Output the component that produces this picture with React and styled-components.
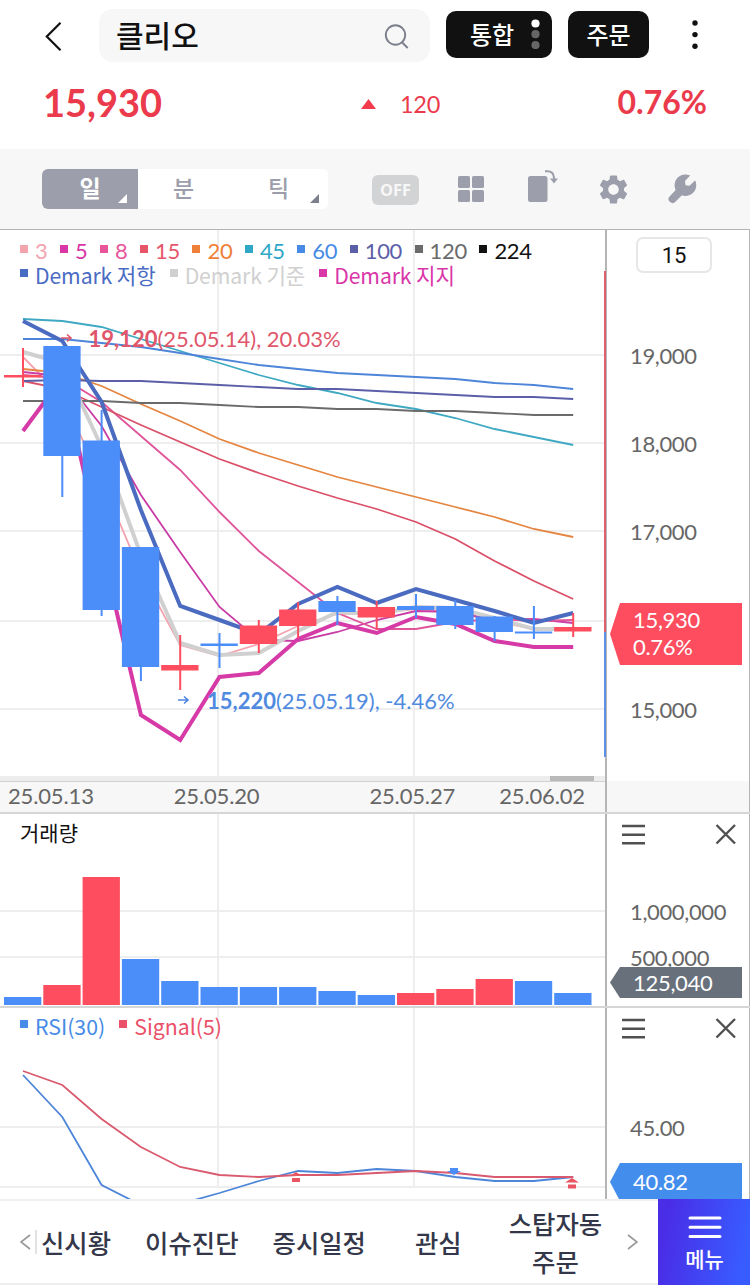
import React from 'react'
import styled, { createGlobalStyle } from 'styled-components'
import { MdSettings } from 'react-icons/md'

const RED = '#fd4d5e'
const BLUE = '#4b8df9'
const NUM = "Lato, 'Noto Sans CJK KR', sans-serif"
const KR = "'Noto Sans CJK KR', sans-serif"

const GlobalStyle = createGlobalStyle`
  * {
    box-sizing: border-box;
  }
  body {
    margin: 0;
    background: #fff;
    font-family: ${KR};
  }
  button {
    border: none;
    padding: 0;
    background: transparent;
    font-family: inherit;
  }
  svg {
    display: block;
    flex: none;
  }
`

const Screen = styled.div`
  width: 750px;
  height: 1285px;
  display: flex;
  flex-direction: column;
  overflow: hidden;
`

const Header = styled.header`
  height: 72px;
  display: flex;
  align-items: flex-start;
  padding: 9px 0 0 45px;
`

const BackButton = styled.button`
  width: 54px;
  height: 53px;
  display: flex;
  align-items: center;
`

const SearchField = styled.div`
  width: 331px;
  height: 53px;
  padding: 0 21px 0 17px;
  border-radius: 14px;
  background: #f7f7f7;
  display: flex;
  align-items: center;
  justify-content: space-between;
  color: #111;
  font-size: 30px;
  font-weight: 500;
  line-height: 50px;
`

const SearchText = styled.span`
  height: 53px;
`

const BlackButton = styled.button`
  width: ${({ $width }) => $width}px;
  height: 47px;
  margin: 2px 0 0 16px;
  border-radius: 10px;
  background: #111;
  color: #fff;
  font-size: 24px;
  font-weight: 500;
  line-height: 44px;
  display: flex;
  align-items: center;
  justify-content: center;
  gap: 17px;
  padding: 0 0 2px ${({ $shift }) => $shift || 0}px;
`

const MoreButton = styled.button`
  margin: 11px 0 0 43px;
`

const PriceRow = styled.div`
  height: 77px;
  display: flex;
  align-items: flex-start;
  padding: 6px 43px 0;
  color: #ea3a4c;
  font-family: ${NUM};
  line-height: 48px;
`

const Price = styled.div`
  width: 318px;
  font-size: 38px;
  font-weight: 700;
`

const Change = styled.div`
  flex: 1;
  height: 52px;
  display: flex;
  align-items: center;
  gap: 24px;
  font-size: 23.5px;
  letter-spacing: -0.3px;
`

const Rate = styled.div`
  font-size: 32px;
  font-weight: 700;
`

const Toolbar = styled.div`
  height: 81px;
  padding-left: 42px;
  border-bottom: 1px solid #b4b4b4;
  background: #f7f7f7;
  display: flex;
  align-items: center;
  color: #9c9fab;
`

const Segments = styled.div`
  width: 286px;
  height: 40px;
  margin-right: 44px;
  border-radius: 6px;
  overflow: hidden;
  background: #fff;
  display: grid;
  grid-template-columns: 96px 91px 99px;
`

const Segment = styled.button`
  position: relative;
  background: ${({ $active }) => ($active ? '#9c9fab' : '#fff')};
  color: ${({ $active }) => ($active ? '#fff' : '#9c9fab')};
  font-size: 23px;
  font-weight: ${({ $active }) => ($active ? 700 : 500)};
  line-height: 34px;
  padding-bottom: 4px;
`

const Corner = styled.i`
  position: absolute;
  right: ${({ $right }) => $right}px;
  bottom: 6px;
  width: 9px;
  height: 9px;
  background: ${({ $color }) => $color};
  clip-path: polygon(100% 0, 100% 100%, 0 100%);
`

const OffBadge = styled.span`
  width: 47px;
  height: 30px;
  margin-top: 1px;
  border-radius: 6px;
  background: #d2d3d5;
  color: #f7f7f7;
  font: 700 16.5px/30px 'Noto Sans', sans-serif;
  text-align: center;
`

const Tool = styled.button`
  display: flex;
  margin-left: ${({ $gap }) => $gap}px;
  color: inherit;
`

const Panel = styled.section`
  height: ${({ $height }) => $height}px;
  flex: none;
  display: grid;
  grid-template-columns: 607px 143px;
  border-bottom: ${({ $line }) => $line || '0'};
  overflow: hidden;
`

const Plot = styled.div`
  position: relative;
  min-width: 0;
  border-right: 2px solid #b5b5b5;

  > svg {
    overflow: visible;
  }
`

const Legend = styled.div`
  position: absolute;
  top: ${({ $top }) => $top}px;
  left: 20px;
`

const LegendRow = styled.div`
  display: flex;
  gap: ${({ $gap }) => $gap}px;
  height: 24px;
  font-family: ${({ $font }) => $font || KR};
  font-size: ${({ $size }) => $size}px;
  letter-spacing: ${({ $spacing }) => $spacing || 0}px;
  line-height: 24px;
`

const LegendItem = styled.span`
  display: flex;
  gap: 7px;
  white-space: nowrap;
  color: ${({ $color }) => $color};

  &::before {
    content: '';
    width: 8px;
    height: 8px;
    margin-top: 6px;
    background: currentColor;
  }
`

const PanelTitle = styled.div`
  position: absolute;
  top: 3px;
  left: 20px;
  color: #111;
  font-size: 21px;
  line-height: 30px;
`

const Axis = styled.div`
  padding-left: 3px;
  border-right: 1px solid #b5b5b5;
  display: flex;
  flex-direction: column;
`

const CountBox = styled.div`
  width: 76px;
  height: 36px;
  margin: 7px 0 0 26px;
  border: 2px solid #e7e7e7;
  border-radius: 7px;
  color: #111;
  font: 22px/33px Roboto, sans-serif;
  text-align: center;
`

const AxisLabel = styled.div`
  flex: none;
  height: 28px;
  margin: ${({ $gap }) => $gap}px 0 0 20px;
  color: #666;
  font-family: ${NUM};
  font-size: 22px;
  letter-spacing: -0.35px;
  line-height: 28px;
`

const AxisTag = styled.div`
  flex: none;
  width: 132px;
  height: ${({ $height }) => $height}px;
  margin-top: ${({ $gap }) => $gap}px;
  padding: ${({ $pad }) => $pad}px 0 0 23px;
  background: ${({ $color }) => $color};
  clip-path: polygon(10px 0, 100% 0, 100% 100%, 10px 100%, 0 50%);
  color: #fff;
  font-family: ${NUM};
  font-size: 22px;
  letter-spacing: -0.3px;
  line-height: 27px;
`

const AxisTools = styled.div`
  display: flex;
  justify-content: space-between;
  padding: 8px 13px 0 12px;
`

const ScrollTrack = styled.div`
  height: 5px;
  padding-left: 550px;
  background: #ededed;

  &::after {
    content: '';
    display: block;
    width: 44px;
    height: 5px;
    background: #b9b9b9;
  }
`

const DateRow = styled.div`
  height: 31px;
  padding: 0 20px 0 8px;
  border-top: 1px solid #d2d2d2;
  background: #f7f7f7;
  display: flex;
  color: #666;
  font-family: ${NUM};
  font-size: 22px;
  letter-spacing: -0.15px;
  line-height: 28px;
`

const DateLabel = styled.span`
  width: ${({ $width }) => $width}px;
`

const DateFiller = styled.div`
  background: #f7f7f7;
  border-right: 1px solid #b5b5b5;
`

const BottomBar = styled.footer`
  height: 86px;
  flex: none;
  display: flex;
`

const Tabs = styled.nav`
  width: 658px;
  border-top: 2px solid #efefef;
  border-bottom: 2px solid #efefef;
  padding-left: 20px;
  display: flex;
  align-items: center;
`

const Divider = styled.i`
  width: 2px;
  height: 24px;
  margin: 0 4px 0 4px;
  background: #e3e3e6;
`

const Tab = styled.button`
  flex: none;
  margin-right: ${({ $gap }) => $gap}px;
  color: #343749;
  font-size: 25.4px;
  font-weight: 500;
  line-height: 38px;
  text-align: center;
`

const MenuButton = styled.button`
  width: 92px;
  background: linear-gradient(100deg, #4a2de6 10%, #385cff 90%);
  color: #fff;
  font-size: 21px;
  font-weight: 500;
  line-height: 28px;
  display: flex;
  flex-direction: column;
  align-items: center;
  padding: 17px 0 0 1px;
  gap: 5px;
`

const averages = [
  { label: '3', color: '#f3a3ae' },
  { label: '5', color: '#d936a8' },
  { label: '8', color: '#e8559a' },
  { label: '15', color: '#e5566a' },
  { label: '20', color: '#ee8038' },
  { label: '45', color: '#2fa8c8' },
  { label: '60', color: '#478be6' },
  { label: '100', color: '#5b5fa8' },
  { label: '120', color: '#6b6b6b' },
  { label: '224', color: '#111' },
]

const demark = [
  { label: 'Demark 저항', color: '#4a6bc4' },
  { label: 'Demark 기준', color: '#d0d0d0' },
  { label: 'Demark 지지', color: '#d936a8' },
]

// one y value per trading day
const lines = [
  { color: '#f3a3ae', y: [357, 397, 480, 573, 645, 656, 644, 626, 614, 613, 609, 612, 621, 629, 629] },
  { color: '#c93ba5', y: [372, 376, 426, 495, 552, 607, 640, 641, 632, 620, 611, 612, 620, 619, 623] },
  { color: '#e0559a', y: [375, 378, 402, 436, 470, 512, 551, 582, 613, 629, 629, 622, 619, 621, 620] },
  { color: '#da5069', y: [381, 389, 407, 425, 442, 459, 473, 486, 498, 509, 522, 539, 561, 581, 599] },
  { color: '#e58540', y: [369, 373, 386, 404, 421, 439, 453, 465, 477, 487, 497, 507, 517, 529, 537] },
  { color: '#3fa9c3', y: [319, 321, 327, 339, 351, 363, 375, 385, 393, 403, 409, 418, 429, 437, 445] },
  { color: '#4d85d8', y: [339, 339, 343, 347, 353, 359, 365, 369, 373, 375, 377, 379, 383, 385, 389] },
  { color: '#5b5fa8', y: [381, 380, 381, 381, 383, 385, 387, 389, 389, 391, 393, 395, 397, 397, 399] },
  { color: '#6b6b6b', y: [401, 401, 401, 403, 403, 405, 407, 407, 409, 409, 411, 411, 413, 415, 415] },
  { color: '#d0d0d0', width: 4, y: [352, 363, 447, 555, 643, 655, 653, 631, 612, 614, 607, 608, 618, 629, 629] },
  { color: '#d63aa6', width: 4, y: [431, 378, 548, 715, 740, 677, 673, 639, 623, 633, 617, 624, 641, 647, 647] },
  { color: '#4a6bc0', width: 4, y: [321, 341, 402, 510, 606, 620, 634, 604, 587, 603, 589, 600, 611, 623, 613] },
]

// [color, body top, body bottom, wick top, wick bottom]
const candles = [
  [RED, 375, 377.5, 348, 387],
  [BLUE, 346, 456, 346, 497],
  [BLUE, 440.5, 610, 410, 616],
  [BLUE, 547, 667, 547, 681],
  [RED, 665, 670.5, 635, 690],
  [BLUE, 643.5, 646, 633, 668],
  [RED, 625.5, 644, 620, 653],
  [RED, 609.5, 626, 602, 638],
  [BLUE, 601, 612, 596, 625],
  [RED, 607, 617.5, 601, 630],
  [BLUE, 606, 610, 594, 618],
  [BLUE, 606, 625, 600, 629],
  [BLUE, 616.5, 632, 616, 641],
  [BLUE, 631.5, 633.5, 606, 639],
  [RED, 627, 631.5, 613, 637],
]

const volumes = [
  [BLUE, 997],
  [RED, 985],
  [RED, 877],
  [BLUE, 959],
  [BLUE, 981],
  [BLUE, 987],
  [BLUE, 987],
  [BLUE, 987],
  [BLUE, 991],
  [BLUE, 995],
  [RED, 993],
  [RED, 989],
  [RED, 979],
  [BLUE, 981],
  [BLUE, 993],
]

const rsi = [1075, 1117, 1185, 1205, 1204, 1193, 1181, 1171, 1173, 1169, 1171, 1177, 1181, 1181, 1177]
const signal = [1071, 1085, 1119, 1147, 1167, 1175, 1177, 1175, 1175, 1173, 1171, 1173, 1177, 1177, 1177]

const STEP = 39.3
const centerX = (i) => 23 + STEP * i
const toPoints = (ys) => ys.map((y, i) => `${centerX(i)},${y}`).join(' ')

const Grid = ({ rows, top, bottom }) => (
  <g fill="#eeeeef">
    {rows.map((y) => (
      <rect key={y} x="0" y={y - 1} width="605" height="2" />
    ))}
    <rect x="217" y={top} width="2" height={bottom - top} />
    <rect x="413" y={top} width="2" height={bottom - top} />
  </g>
)

const Arrow = ({ x, y, color }) => (
  <path
    d={`M${x} ${y}h10M${x + 6} ${y - 3.5}l4 3.5l-4 3.5`}
    fill="none"
    stroke={color}
    strokeWidth="1.6"
  />
)

const Note = ({ x, y, color, price, rest }) => (
  <text x={x} y={y} fill={color} fontFamily={NUM} fontSize="22">
    <tspan fontWeight="700">{price}</tspan>
    {rest}
  </text>
)

const PriceChart = () => (
  <svg width="605" height="546" viewBox="0 230 605 546">
    <Grid rows={[355, 443, 531, 621, 709]} top={230} bottom={776} />
    {lines.map(({ color, width, y }, i) => (
      <polyline
        key={i}
        points={toPoints(y)}
        fill="none"
        stroke={color}
        strokeWidth={width || 1.8}
      />
    ))}
    {candles.map(([color, top, bottom, high, low], i) => (
      <g key={i} fill={color}>
        <rect x={centerX(i) - 1} y={high} width="2" height={low - high} />
        <rect x={4 + STEP * i} y={top} width="37.3" height={bottom - top} />
      </g>
    ))}
    <Arrow x={61} y={338} color="#e0566a" />
    <Note x={88.5} y={347} color="#e0566a" price="19,120" rest="(25.05.14), 20.03%" />
    <Arrow x={178} y={700} color="#4d85e0" />
    <Note x={207} y={709} color="#4f8ae0" price="15,220" rest="(25.05.19), -4.46%" />
    <rect x="604" y="271" width="2" height="361" fill="#e2606e" />
    <rect x="604" y="632" width="2" height="125" fill="#5b92e6" />
  </svg>
)

const VolumeChart = () => (
  <svg width="605" height="192" viewBox="0 814 605 192">
    <Grid rows={[911, 957]} top={814} bottom={1006} />
    {volumes.map(([color, top], i) => (
      <rect key={i} x={4 + STEP * i} y={top} width="37.3" height={1005 - top} fill={color} />
    ))}
  </svg>
)

const RsiChart = () => (
  <svg width="605" height="191" viewBox="0 1008 605 191">
    <Grid rows={[1127, 1187]} top={1008} bottom={1186} />
    <polyline points={toPoints(rsi)} fill="none" stroke="#4d85d8" strokeWidth="1.8" />
    <polyline points={toPoints(signal)} fill="none" stroke="#d95a6e" strokeWidth="1.8" />
    <path d="M290 1176l6-4l6 4zM292 1178h8v4h-8z" fill="#ea5564" />
    <path d="M450 1168h8v3h3l-7 4l-7-4h3z" fill={BLUE} />
    <path d="M565 1182.5l7-4.5l7 4.5zM568 1184.5h8v4h-8z" fill="#ea5564" />
  </svg>
)

const WrenchIcon = () => (
  <svg width="29" height="30" viewBox="0 0 29 30">
    <circle cx="17.4" cy="11.2" r="10.8" fill="currentColor" />
    <path d="M14 15.4L4.6 25" stroke="currentColor" strokeWidth="8" strokeLinecap="round" />
    <path d="M24.5-1L17 7l.5 4.2 4 .5L30 3.5z" fill="#f7f7f7" />
  </svg>
)

const PanelTools = () => (
  <AxisTools>
    <svg width="23" height="24" viewBox="0 0 23 24" stroke="#505050" strokeWidth="2.4">
      <path d="M0 4h23M0 12.7h23M0 21.3h23" />
    </svg>
    <svg width="22" height="24" viewBox="0 0 22 24" stroke="#505050" strokeWidth="2.4">
      <path d="M2.5 3l18.5 18.5M21 3L2.5 21.5" />
    </svg>
  </AxisTools>
)

const App = () => (
  <Screen>
    <GlobalStyle />
    <Header>
      <BackButton>
        <svg width="17" height="30" viewBox="0 0 17 30" fill="none" stroke="#111" strokeWidth="2.2">
          <path d="M15.5 1.8L1.8 15.6l13.7 13.6" />
        </svg>
      </BackButton>
      <SearchField>
        <SearchText>클리오</SearchText>
        <svg width="25" height="26" viewBox="0 0 25 26" fill="none" stroke="#7d808c" strokeWidth="1.9">
          <circle cx="11.5" cy="12" r="9.7" />
          <path d="M17.7 19l6 6" />
        </svg>
      </SearchField>
      <BlackButton $width={106} $shift={12}>
        통합
        <svg width="9" height="30" viewBox="0 0 9 30" fill="#666">
          <circle cx="4.5" cy="4.5" r="4.1" fill="#fff" />
          <circle cx="4.5" cy="15.2" r="4.1" />
          <circle cx="4.5" cy="26" r="4.1" />
        </svg>
      </BlackButton>
      <BlackButton $width={81}>주문</BlackButton>
      <MoreButton>
        <svg width="6" height="30" viewBox="0 0 6 30" fill="#111">
          <circle cx="3" cy="3" r="2.7" />
          <circle cx="3" cy="14.6" r="2.7" />
          <circle cx="3" cy="26.2" r="2.7" />
        </svg>
      </MoreButton>
    </Header>
    <PriceRow>
      <Price>15,930</Price>
      <Change>
        <svg width="15" height="10" viewBox="0 0 15 10" fill="#f23c4d">
          <path d="M7.5 0L15 10H0z" />
        </svg>
        120
      </Change>
      <Rate>0.76%</Rate>
    </PriceRow>
    <Toolbar>
      <Segments>
        <Segment $active>
          일
          <Corner $right={11} $color="#fff" />
        </Segment>
        <Segment>분</Segment>
        <Segment>
          틱
          <Corner $right={9} $color="#7d808c" />
        </Segment>
      </Segments>
      <OffBadge>OFF</OffBadge>
      <Tool $gap={39}>
        <svg width="26" height="26" viewBox="0 0 26 26" fill="currentColor">
          <rect width="12" height="12" rx="1.5" />
          <rect x="14" width="12" height="12" rx="1.5" />
          <rect y="14" width="12" height="12" rx="1.5" />
          <rect x="14" y="14" width="12" height="12" rx="1.5" />
        </svg>
      </Tool>
      <Tool $gap={44}>
        <svg width="30" height="40" viewBox="0 0 30 40" fill="currentColor">
          <rect y="7" width="19.5" height="26" rx="2.5" />
          <path d="M17 2.2h2.5q6 0 6.5 6.5v2" fill="none" stroke="currentColor" strokeWidth="2" />
          <path d="M22 9.5h8l-4 5z" />
        </svg>
      </Tool>
      <Tool $gap={38}>
        <MdSettings size={35} />
      </Tool>
      <Tool $gap={37}>
        <WrenchIcon />
      </Tool>
    </Toolbar>

    <Panel $height={551}>
      <Plot>
        <PriceChart />
        <ScrollTrack />
        <Legend $top={9}>
          <LegendRow $gap={12.6} $size={22} $spacing={-0.35} $font={NUM}>
            {averages.map(({ label, color }) => (
              <LegendItem key={label} $color={color}>
                {label}
              </LegendItem>
            ))}
          </LegendRow>
          <LegendRow $gap={14} $size={21.2} $spacing={-0.1}>
            {demark.map(({ label, color }) => (
              <LegendItem key={label} $color={color}>
                {label}
              </LegendItem>
            ))}
          </LegendRow>
        </Legend>
      </Plot>
      <Axis>
        <CountBox>15</CountBox>
        <AxisLabel $gap={69}>19,000</AxisLabel>
        <AxisLabel $gap={60}>18,000</AxisLabel>
        <AxisLabel $gap={60}>17,000</AxisLabel>
        <AxisTag $gap={57} $height={62} $pad={3} $color={RED}>
          15,930
          <br />
          0.76%
        </AxisTag>
        <AxisLabel $gap={31}>15,000</AxisLabel>
      </Axis>
    </Panel>

    <Panel $height={33} $line="2px solid #d6d6d6">
      <Plot>
        <DateRow>
          <DateLabel $width={166}>25.05.13</DateLabel>
          <DateLabel $width={196}>25.05.20</DateLabel>
          <DateLabel $width={130}>25.05.27</DateLabel>
          <DateLabel $width={86}>25.06.02</DateLabel>
        </DateRow>
      </Plot>
      <DateFiller />
    </Panel>

    <Panel $height={194} $line="2px solid #d6d6d6">
      <Plot>
        <VolumeChart />
        <PanelTitle>거래량</PanelTitle>
      </Plot>
      <Axis>
        <PanelTools />
        <AxisLabel $gap={52}>1,000,000</AxisLabel>
        <AxisLabel $gap={18}>500,000</AxisLabel>
        <AxisTag $gap={-5} $height={31} $pad={2} $color="#67707b">
          125,040
        </AxisTag>
      </Axis>
    </Panel>

    <Panel $height={191}>
      <Plot>
        <RsiChart />
        <Legend $top={6}>
          <LegendRow $gap={14} $size={21.3}>
            <LegendItem $color="#478be6">RSI(30)</LegendItem>
            <LegendItem $color="#ea5068">Signal(5)</LegendItem>
          </LegendRow>
        </Legend>
      </Plot>
      <Axis>
        <PanelTools />
        <AxisLabel $gap={74}>45.00</AxisLabel>
        <AxisTag $gap={21} $height={38} $pad={5} $color="#438ded">
          40.82
        </AxisTag>
      </Axis>
    </Panel>

    <BottomBar>
      <Tabs>
        <svg width="11" height="16" viewBox="0 0 11 16" fill="none" stroke="#999" strokeWidth="1.6">
          <path d="M10 1L1 8l9 7" />
        </svg>
        <Divider />
        <Tab $gap={34}>신시황</Tab>
        <Tab $gap={34}>이슈진단</Tab>
        <Tab $gap={49}>증시일정</Tab>
        <Tab $gap={47}>관심</Tab>
        <Tab $gap={25}>
          스탑자동
          <br />
          주문
        </Tab>
        <svg width="11" height="16" viewBox="0 0 11 16" fill="none" stroke="#999" strokeWidth="1.6">
          <path d="M1 1l9 7l-9 7" />
        </svg>
      </Tabs>
      <MenuButton>
        <svg width="34" height="23" viewBox="0 0 34 23" stroke="#fff" strokeWidth="3" strokeLinecap="round">
          <path d="M2 2h30M2 11.3h30M2 20.6h30" />
        </svg>
        메뉴
      </MenuButton>
    </BottomBar>
  </Screen>
)

export default App
